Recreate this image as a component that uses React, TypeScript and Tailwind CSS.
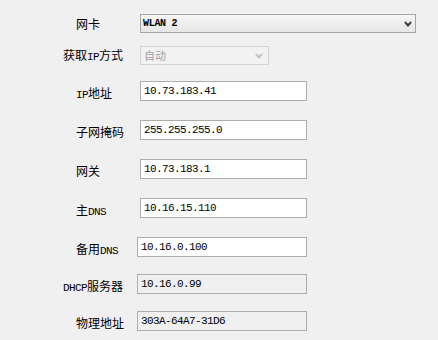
import React from "react"

const cjk = "font-['Noto_Sans_CJK_SC','Noto_Sans',sans-serif]"
const mono = "font-['Liberation_Mono','Noto_Sans_CJK_SC',monospace]"

type Row = { label: string; value: string; long?: boolean; readOnly?: boolean; narrow?: boolean; mt: string }

const rows: Row[] = [
  { label: "IP地址", value: "10.73.183.41", mt: "mt-[16px]" },
  { label: "子网掩码", value: "255.255.255.0", mt: "mt-[19px]" },
  { label: "网关", value: "10.73.183.1", mt: "mt-[19px]" },
  { label: "主DNS", value: "10.16.15.110", mt: "mt-[19px]" },
  { label: "备用DNS", value: "10.16.0.100", narrow: true, mt: "mt-[19px]" },
  { label: "DHCP服务器", value: "10.16.0.99", long: true, narrow: true, readOnly: true, mt: "mt-[17px]" },
  { label: "物理地址", value: "303A-64A7-31D6", narrow: true, readOnly: true, mt: "mt-[17px]" },
]

// latin letters in labels are half width, like the old dialog font
const Label = ({ text }: { text: string }) => (
  <>
    {text.split(/([A-Za-z]+)/).map((part, i) =>
      /^[A-Za-z]+$/.test(part) ? (
        <span key={i} className={`${mono} text-[11px] tracking-[-0.6px]`}>{part}</span>
      ) : (
        <span key={i}>{part}</span>
      )
    )}
  </>
)

const Chevron = ({ color }: { color: string }) => (
  <svg width="8" height="6" viewBox="0 0 8 6">
    <path d="M1 1 L4 4.5 L7 1" fill="none" stroke={color} strokeWidth="2" />
  </svg>
)

const App = () => {
  return (
    <div className={`w-[438px] h-[340px] bg-[#f0f0f0] pt-[14px] pl-[63px] text-black ${cjk}`}>
      {/* 网卡 */}
      <div className="flex items-center h-[19px]">
        <div className="w-[77px] pl-[13px] text-[12px] leading-none">网卡</div>
        <div className="w-[276px] h-[19px] flex items-center justify-between border border-[#a6a6a6] bg-gradient-to-b from-[#f6f6f6] to-[#e6e6e6] pl-[2px] pr-[3px]">
          <span className={`${mono} text-[10px] font-bold tracking-[-0.3px]`}>WLAN 2</span>
          <Chevron color="#3c3c3c" />
        </div>
      </div>

      {/* 获取IP方式 */}
      <div className="flex items-center h-[19px] mt-[13px]">
        <div className="w-[77px] text-[12px] leading-none whitespace-nowrap"><Label text="获取IP方式" /></div>
        <div className="w-[129px] h-[19px] flex items-center justify-between border border-[#d4d4d4] bg-[#f2f2f2] pl-[3px] pr-[5px]">
          <span className="text-[11px] text-[#a3a3a3] leading-none">自动</span>
          <Chevron color="#c4c4c4" />
        </div>
      </div>

      {rows.map((r) => (
        <div key={r.label} className={`flex items-start ${r.mt}`}>
          <div className={`${r.narrow ? "w-[74px]" : "w-[77px]"} ${r.long ? "pl-0" : "pl-[13px]"} pt-[6px] text-[12px] leading-[12px] whitespace-nowrap`}>
            <Label text={r.label} />
          </div>
          <input
            readOnly
            value={r.value}
            className={`${r.narrow ? "w-[170px]" : "w-[167px]"} h-[20px] border border-[#adadad] ${r.readOnly ? "bg-[#f0f0f0]" : "bg-white"} px-[3px] ${mono} text-[11px] tracking-[-0.6px] text-black outline-none`}
          />
        </div>
      ))}
    </div>
  )
}

export default App
